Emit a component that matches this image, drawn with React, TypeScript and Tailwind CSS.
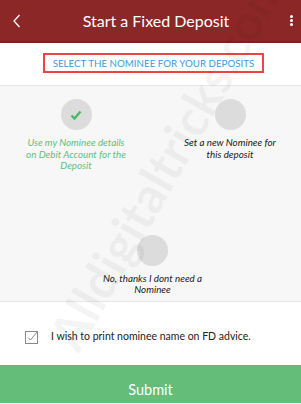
import React from 'react';

const CheckCircle: React.FC<{ checked?: boolean }> = ({ checked }) => (
  <div className="w-[31px] h-[31px] rounded-full bg-[#dcdcdc] flex items-center justify-center">
    {checked && (
      <svg width="12" height="10" viewBox="0 0 12 10">
        <path d="M1.5 5.5 L4.5 8.5 L10.5 1.5" fill="none" stroke="#4cb866" strokeWidth="2.4" />
      </svg>
    )}
  </div>
);

const Option: React.FC<{ checked?: boolean; label: string; green?: boolean }> = ({ checked, label, green }) => (
  <div className="flex flex-col items-center">
    <CheckCircle checked={checked} />
    <p
      className={`mt-[7px] w-[104px] text-center italic text-[9.8px] leading-[11.5px] ${
        green ? 'text-[#62c079]' : 'text-[#1a1a1a]'
      }`}
    >
      {label}
    </p>
  </div>
);

export default function App() {
  return (
    <div className="relative w-[301px] h-[404px] overflow-hidden bg-white font-['Lato',sans-serif]">
      <header className="h-[43px] bg-[#8c2727] border-b-2 border-[#7c2020] flex items-center justify-between px-[12px] text-white">
        <svg width="10" height="14" viewBox="0 0 10 14">
          <path d="M7.5 1 L2 7 L7.5 13" fill="none" stroke="white" strokeWidth="1.3" />
        </svg>
        <h1 className="text-[16px]">Start a Fixed Deposit</h1>
        <div className="flex flex-col gap-[1px] mr-[-4px]">
          <span className="w-[3px] h-[3px] rounded-full bg-white" />
          <span className="w-[3px] h-[3px] rounded-full bg-white" />
          <span className="w-[3px] h-[3px] rounded-full bg-white" />
        </div>
      </header>

      <div className="h-[42px] flex justify-center pt-[10px] pl-[6px]">
        <div className="h-[20px] border-2 border-[#ef4444] px-[8px] flex items-center">
          <span className="text-[9.75px] text-[#3d9ae0]">SELECT THE NOMINEE FOR YOUR DEPOSITS</span>
        </div>
      </div>

      <section className="h-[217px] bg-[#f7f7f7] border-t border-[#e6e6e6] border-b pt-[13px] overflow-hidden">
        <div className="grid grid-cols-[154px_154px] -ml-[1px]">
          <Option checked green label="Use my Nominee details on Debit Account for the Deposit" />
          <Option label="Set a new Nominee for this deposit" />
        </div>
        <div className="mt-[63px] flex justify-center pl-[4px]">
          <Option label="No, thanks I dont need a Nominee" />
        </div>
      </section>

      <div className="h-[63px] flex items-center pl-[25px] gap-[11px] pt-[7px]">
        <svg width="15" height="15" viewBox="0 0 15 15">
          <rect x="0.5" y="1.5" width="12" height="12" fill="none" stroke="#8a8a8a" strokeWidth="1" />
          <path d="M3 7.5 L5.5 10 L12 2" fill="none" stroke="#8a8a8a" strokeWidth="1" />
        </svg>
        <span className="text-[10.5px] text-[#222]">I wish to print nominee name on FD advice.</span>
      </div>

      <button className="w-full h-[38px] bg-[#64bd78] text-white text-[14.5px] pt-[12px]">
        Submit
      </button>

      <div className="pointer-events-none absolute left-[62px] top-[320px] -rotate-[60.5deg] origin-left text-[50px] leading-none font-bold text-black/[0.045] whitespace-nowrap">
        Alldigitaltricks.com
      </div>
    </div>
  );
}
